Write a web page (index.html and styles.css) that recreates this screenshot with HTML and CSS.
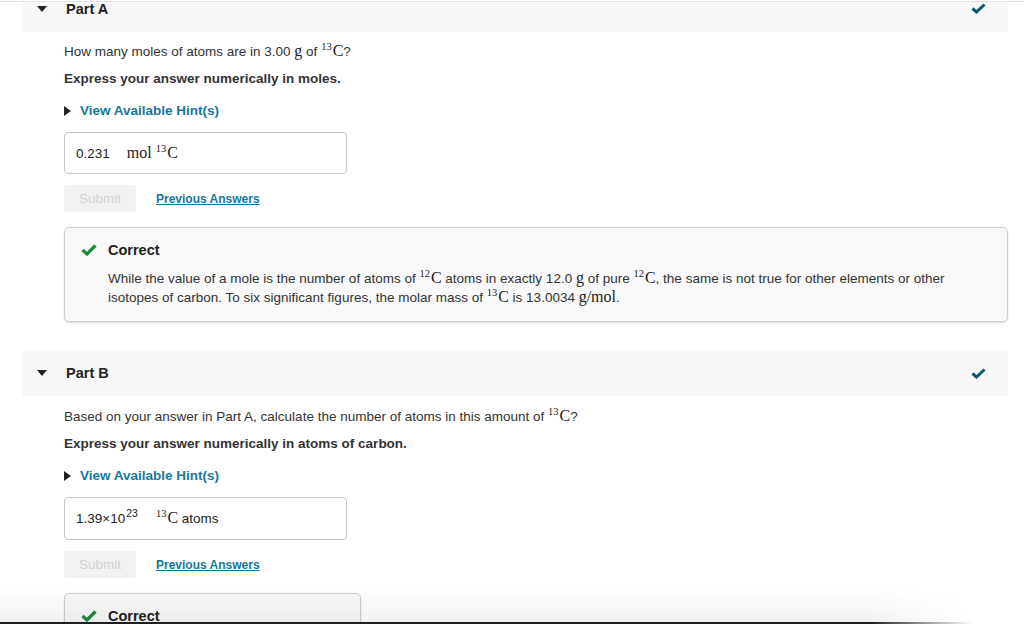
FILE: index.html
```html
<!DOCTYPE html>
<html lang="en">
  <head>
    <meta charset="UTF-8" />
    <meta name="viewport" content="width=device-width, initial-scale=1.0" />
    <title>Moles of Carbon-13</title>
    <link rel="stylesheet" href="styles.css">
  </head>
  <body>
    <div class="topbar"></div>

    <div class="viewport">
      <div class="parts">
        <!-- Part A -->
        <section class="part">
          <div class="part-head">
            <svg class="caret" width="10" height="6" viewBox="0 0 10 6"><polygon points="0,0 10,0 5,6" fill="#222" /></svg>
            <span class="part-title">Part A</span>
            <svg class="done" width="15" height="11" viewBox="0 0 15 11"><polyline points="1.5,5.5 5.5,9 13.5,1.5" fill="none" stroke="#0f5a72" stroke-width="3" /></svg>
          </div>
          <div class="part-body">
            <p class="question">How many moles of atoms are in 3.00 <span class="m">g</span> of <span class="m"><sup>13</sup>C</span>?</p>
            <p class="instruction">Express your answer numerically in moles.</p>
            <a class="hint" href="#"><svg width="7" height="10" viewBox="0 0 7 10"><polygon points="0,0 7,5 0,10" fill="#222" /></svg>View Available Hint(s)</a>
            <div class="answer">
              <span class="value">0.231</span>
              <span class="unit m">mol <sup>13</sup>C</span>
            </div>
            <div class="actions">
              <button class="submit" disabled>Submit</button>
              <a class="prev" href="#">Previous Answers</a>
            </div>
            <div class="feedback">
              <div class="feedback-head">
                <svg width="16" height="12" viewBox="0 0 16 12"><polyline points="1.5,6 6,10 14.5,1.5" fill="none" stroke="#1f8a3c" stroke-width="3.2" /></svg>
                <strong>Correct</strong>
              </div>
              <p class="feedback-text">While the value of a mole is the number of atoms of <span class="m"><sup>12</sup>C</span> atoms in exactly 12.0 <span class="m">g</span> of pure <span class="m"><sup>12</sup>C</span>, the same is not true for other elements or other isotopes of carbon. To six significant figures, the molar mass of <span class="m"><sup>13</sup>C</span> is 13.0034 <span class="m">g/mol</span>.</p>
            </div>
          </div>
        </section>

        <!-- Part B -->
        <section class="part">
          <div class="part-head">
            <svg class="caret" width="10" height="6" viewBox="0 0 10 6"><polygon points="0,0 10,0 5,6" fill="#222" /></svg>
            <span class="part-title">Part B</span>
            <svg class="done" width="15" height="11" viewBox="0 0 15 11"><polyline points="1.5,5.5 5.5,9 13.5,1.5" fill="none" stroke="#0f5a72" stroke-width="3" /></svg>
          </div>
          <div class="part-body">
            <p class="question">Based on your answer in Part A, calculate the number of atoms in this amount of <span class="m"><sup>13</sup>C</span>?</p>
            <p class="instruction">Express your answer numerically in atoms of carbon.</p>
            <a class="hint" href="#"><svg width="7" height="10" viewBox="0 0 7 10"><polygon points="0,0 7,5 0,10" fill="#222" /></svg>View Available Hint(s)</a>
            <div class="answer tall">
              <span class="value">1.39×10<sup class="exp">23</sup></span>
              <span class="unit"><span class="m"><sup>13</sup>C</span> atoms</span>
            </div>
            <div class="actions">
              <button class="submit" disabled>Submit</button>
              <a class="prev" href="#">Previous Answers</a>
            </div>
            <div class="feedback narrow">
              <div class="feedback-head">
                <svg width="16" height="12" viewBox="0 0 16 12"><polyline points="1.5,6 6,10 14.5,1.5" fill="none" stroke="#1f8a3c" stroke-width="3.2" /></svg>
                <strong>Correct</strong>
              </div>
              <p class="feedback-text">&nbsp;</p>
            </div>
          </div>
        </section>
      </div>
    </div>

    <div class="page-shade"></div>
  </body>
</html>
```

FILE: styles.css
```css
html,
body {
  height: 100%;
}
body {
  margin: 0;
  font-family: "Liberation Sans", Arial, sans-serif;
  font-size: 13.5px;
  color: #333;
  background-color: #fff;
  overflow: hidden;
}
.topbar {
  height: 1px;
  border-bottom: 1px solid #e3e3e3;
}
.viewport {
  overflow: hidden;
}
.parts {
  margin: -17px 16px 0 22px;
}
.part {
  margin-bottom: 28px;
}
.part-head {
  display: flex;
  align-items: center;
  height: 46px;
  padding: 0 22px 0 15px;
  background-color: #f8f8f8;
}
.part:first-child .part-head {
  height: 47px;
}
.caret {
  margin-right: 19px;
}
.part-title {
  flex: 1;
  font-size: 14.5px;
  font-weight: bold;
  color: #222;
}
.part-body {
  padding: 10px 0 0 42px;
}
.part + .part .part-body {
  padding-top: 11px;
}
.part-body p {
  margin: 0;
  line-height: 20px;
}
.m {
  font-family: "Liberation Serif", "DejaVu Serif", serif;
  font-size: 16px;
  line-height: 1;
  color: #222;
}
.m sup,
.exp {
  font-size: 10.5px;
  line-height: 0;
  vertical-align: 6px;
  margin-right: 1px;
}
.exp {
  font-family: "Liberation Sans", Arial, sans-serif;
  font-size: 10.5px;
  margin-left: 1px;
}
.question {
  color: #333;
}
.instruction {
  margin-top: 7px !important;
  font-weight: bold;
  color: #333;
}
.hint {
  display: inline-flex;
  align-items: center;
  gap: 9px;
  margin-top: 12px;
  line-height: 20px;
  font-weight: bold;
  color: #17779b;
  text-decoration: none;
}
.answer {
  display: flex;
  align-items: center;
  width: 283px;
  margin-top: 11px;
  padding: 11px 11px;
  line-height: 17px;
  border: 1px solid #c9c9c9;
  border-radius: 4px;
  box-sizing: border-box;
  height: 42px;
  color: #222;
}
.answer.tall {
  height: 43px;
}
.value {
  margin-right: 17px;
}
.actions {
  display: flex;
  align-items: center;
  gap: 20px;
  margin-top: 11px;
}
.submit {
  width: 72px;
  height: 27px;
  padding: 0;
  font-family: "Liberation Sans", Arial, sans-serif;
  font-size: 13.5px;
  color: #d2d2d2;
  background-color: #f2f2f2;
  border: none;
  border-radius: 2px;
}
.prev {
  font-size: 12px;
  font-weight: bold;
  color: #17779b;
}
.feedback {
  margin-top: 15px;
  padding: 12px 16px 14px;
  background-color: #f9f9f9;
  border: 1px solid #cfcfcf;
  border-radius: 5px;
  box-shadow: 0 1px 2px rgba(0, 0, 0, 0.15);
}
.feedback.narrow {
  width: 297px;
  box-sizing: border-box;
}
.feedback-head {
  display: flex;
  align-items: center;
  gap: 11px;
  height: 19px;
  font-size: 14.5px;
  color: #222;
}
.part-body .feedback-text {
  margin: 10px 0 0 27px;
  line-height: 19px;
  color: #333;
}
.page-shade {
  position: fixed;
  left: 0;
  right: 0;
  bottom: 0;
  height: 36px;
  border-bottom: 2px solid #1f1f22;
  background: linear-gradient(to bottom, rgba(0, 0, 0, 0), rgba(0, 0, 0, 0.05));
  -webkit-mask-image: linear-gradient(to right, #000 85%, transparent 95%);
  pointer-events: none;
}
```
